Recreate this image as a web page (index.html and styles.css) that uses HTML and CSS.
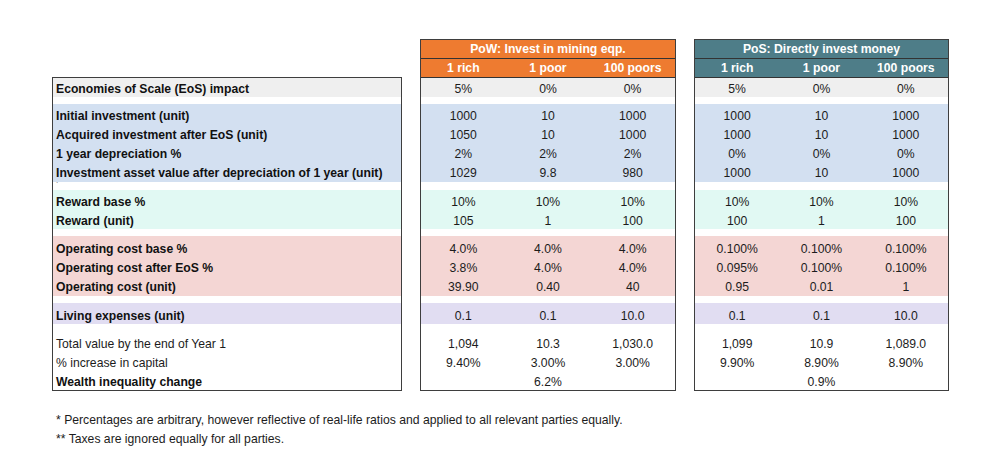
FILE: index.html
```html
<!DOCTYPE html>
<html lang="en">
<head>
<meta charset="utf-8">
<title>PoW vs PoS</title>
<link rel="stylesheet" href="styles.css">
</head>
<body>
<main class="page">
  <div class="tables">
    <section class="tbl labels">
      <div class="body">
        <div class="band gray"><div class="row">Economies of Scale (EoS) impact</div></div>
        <div class="band blue">
          <div class="row">Initial investment (unit)</div>
          <div class="row">Acquired investment after EoS (unit)</div>
          <div class="row">1 year depreciation %</div>
          <div class="row">Investment asset value after depreciation of 1 year (unit)</div>
        </div>
        <div class="band green tick">
          <div class="row">Reward base %</div>
          <div class="row">Reward (unit)</div>
        </div>
        <div class="band pink">
          <div class="row">Operating cost base %</div>
          <div class="row">Operating cost after EoS %</div>
          <div class="row">Operating cost (unit)</div>
        </div>
        <div class="band purple"><div class="row">Living expenses (unit)</div></div>
        <div class="band plain">
          <div class="row normal">Total value by the end of Year 1</div>
          <div class="row normal">% increase in capital</div>
          <div class="row">Wealth inequality change</div>
        </div>
      </div>
    </section>

    <section class="tbl data pow">
      <div class="head">
        <div class="title">PoW: Invest in mining eqp.</div>
        <div class="sub"><span>1 rich</span><span>1 poor</span><span>100 poors</span></div>
      </div>
      <div class="body">
        <div class="band gray"><div class="row"><span>5%</span><span>0%</span><span>0%</span></div></div>
        <div class="band blue">
          <div class="row"><span>1000</span><span>10</span><span>1000</span></div>
          <div class="row"><span>1050</span><span>10</span><span>1000</span></div>
          <div class="row"><span>2%</span><span>2%</span><span>2%</span></div>
          <div class="row"><span>1029</span><span>9.8</span><span>980</span></div>
        </div>
        <div class="band green">
          <div class="row"><span>10%</span><span>10%</span><span>10%</span></div>
          <div class="row"><span>105</span><span>1</span><span>100</span></div>
        </div>
        <div class="band pink">
          <div class="row"><span>4.0%</span><span>4.0%</span><span>4.0%</span></div>
          <div class="row"><span>3.8%</span><span>4.0%</span><span>4.0%</span></div>
          <div class="row"><span>39.90</span><span>0.40</span><span>40</span></div>
        </div>
        <div class="band purple"><div class="row"><span>0.1</span><span>0.1</span><span>10.0</span></div></div>
        <div class="band plain">
          <div class="row"><span>1,094</span><span>10.3</span><span>1,030.0</span></div>
          <div class="row"><span>9.40%</span><span>3.00%</span><span>3.00%</span></div>
          <div class="row"><span></span><span>6.2%</span><span></span></div>
        </div>
      </div>
    </section>

    <section class="tbl data pos">
      <div class="head">
        <div class="title">PoS: Directly invest money</div>
        <div class="sub"><span>1 rich</span><span>1 poor</span><span>100 poors</span></div>
      </div>
      <div class="body">
        <div class="band gray"><div class="row"><span>5%</span><span>0%</span><span>0%</span></div></div>
        <div class="band blue">
          <div class="row"><span>1000</span><span>10</span><span>1000</span></div>
          <div class="row"><span>1000</span><span>10</span><span>1000</span></div>
          <div class="row"><span>0%</span><span>0%</span><span>0%</span></div>
          <div class="row"><span>1000</span><span>10</span><span>1000</span></div>
        </div>
        <div class="band green">
          <div class="row"><span>10%</span><span>10%</span><span>10%</span></div>
          <div class="row"><span>100</span><span>1</span><span>100</span></div>
        </div>
        <div class="band pink">
          <div class="row"><span>0.100%</span><span>0.100%</span><span>0.100%</span></div>
          <div class="row"><span>0.095%</span><span>0.100%</span><span>0.100%</span></div>
          <div class="row"><span>0.95</span><span>0.01</span><span>1</span></div>
        </div>
        <div class="band purple"><div class="row"><span>0.1</span><span>0.1</span><span>10.0</span></div></div>
        <div class="band plain">
          <div class="row"><span>1,099</span><span>10.9</span><span>1,089.0</span></div>
          <div class="row"><span>9.90%</span><span>8.90%</span><span>8.90%</span></div>
          <div class="row"><span></span><span>0.9%</span><span></span></div>
        </div>
      </div>
    </section>
  </div>

  <div class="notes">
    <p>* Percentages are arbitrary, however reflective of real-life ratios and applied to all relevant parties equally.</p>
    <p>** Taxes are ignored equally for all parties.</p>
  </div>
</main>
</body>
</html>
```

FILE: styles.css
```css
html, body {
  margin: 0;
  padding: 0;
  background: #ffffff;
}

.page {
  padding: 39px 0 0 52px;
  font-family: "Liberation Sans", Arial, Helvetica, sans-serif;
  font-size: 12.2px;
  color: #1c1c1c;
}

.tables {
  display: flex;
  align-items: flex-end;
  gap: 18px;
}

.tbl {
  box-sizing: border-box;
  border: 1px solid #3e3e3e;
  display: flex;
  flex-direction: column;
}

.labels { width: 350px; }
.data.pow { width: 256px; }
.data.pos { width: 255px; }

.body {
  display: flex;
  flex-direction: column;
  gap: 7px;
}

.row {
  box-sizing: border-box;
  height: 19px;
  padding-top: 3px;
  line-height: 16px;
  white-space: nowrap;
}

.labels .row {
  padding-left: 3px;
  font-weight: bold;
  color: #111;
}

.labels .row.normal {
  font-weight: normal;
  color: #1c1c1c;
}

.data .row,
.data .sub {
  display: grid;
  grid-template-columns: repeat(3, 1fr);
  text-align: center;
}

.head .title,
.head .sub {
  height: 18px;
  line-height: 18px;
  font-weight: bold;
  color: #ffffff;
  border-bottom: 1px solid #333;
}

.head .title { text-align: center; }

.pow .head { background: #ee7b30; }
.pos .head { background: #4e7d88; }

.gray { background: #efefef; }
.blue { background: #d3e0f1; padding: 1px 0; }
.green { background: #e1f9f3; padding-top: 1px; margin-top: 1px; }
.pink { background: #f4d6d4; padding: 2px 0 1px; }
.purple { background: #e1ddf2; padding-top: 2px; }
.plain { padding-top: 2px; }

.labels .tick { position: relative; }
.labels .tick::before {
  content: "`";
  position: absolute;
  left: 3px;
  top: -9px;
  font-size: 7px;
  line-height: 7px;
  color: #333;
}

.notes {
  margin-top: 20px;
  padding-left: 4px;
  color: #1c1c1c;
}

.notes p {
  margin: 0;
  height: 19px;
  line-height: 19px;
}
```
